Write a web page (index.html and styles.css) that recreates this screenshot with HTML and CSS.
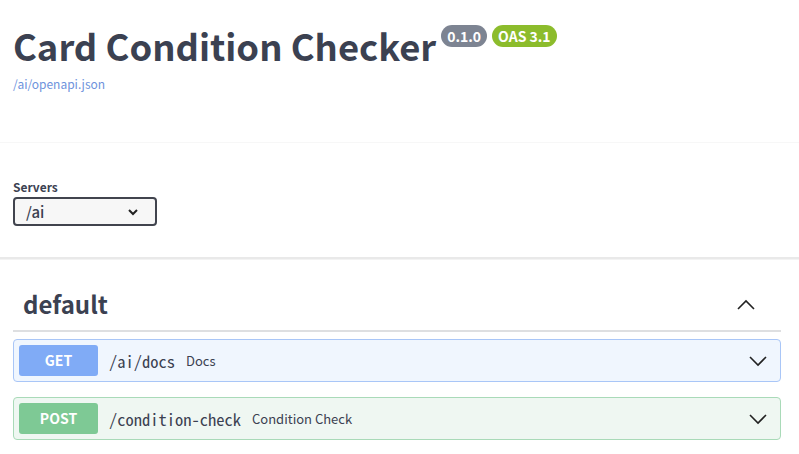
FILE: index.html
```html
<!DOCTYPE html>
<html>
<head>
<meta charset="utf-8">
<link rel="stylesheet" href="styles.css">
</head>
<body>
<div class="info">
  <div class="title-row">
    <h2 class="title">Card Condition Checker</h2>
    <span class="badge version">0.1.0</span>
    <span class="badge oas">OAS 3.1</span>
  </div>
  <a class="link" href="#">/ai/openapi.json</a>
</div>
<div class="divider"></div>
<div class="scheme">
  <div class="servers-label">Servers</div>
  <div class="select"><span>/ai</span>
    <svg width="12" height="8" viewBox="0 0 12 8"><path d="M2 2 L6 6 L10 2" fill="none" stroke="#222" stroke-width="2"/></svg>
  </div>
</div>
<div class="ops">
  <div class="tag">
    <h3 class="tag-name">default</h3>
    <svg class="chev" width="20" height="12" viewBox="0 0 20 12"><path d="M2 11 L10 3 L18 11" fill="none" stroke="#222" stroke-width="1.6"/></svg>
  </div>
  <div class="op get">
    <span class="method">GET</span>
    <span class="path">/ai/docs</span>
    <span class="summary">Docs</span>
    <svg class="chev-down" width="20" height="12" viewBox="0 0 20 12"><path d="M2 2 L10 10 L18 2" fill="none" stroke="#222" stroke-width="1.6"/></svg>
  </div>
  <div class="op post">
    <span class="method">POST</span>
    <span class="path">/condition-check</span>
    <span class="summary">Condition Check</span>
    <svg class="chev-down" width="20" height="12" viewBox="0 0 20 12"><path d="M2 2 L10 10 L18 2" fill="none" stroke="#222" stroke-width="1.6"/></svg>
  </div>
</div>
</body>
</html>
```
FILE: styles.css
```css
html, body {
  margin: 0;
  padding: 0;
  background: #fff;
  font-family: "Noto Sans CJK JP", "Noto Sans", sans-serif;
  color: #3b4151;
}
.info {
  padding: 20px 18px 0 13px;
  height: 120px;
  box-sizing: border-box;
}
.title-row {
  display: flex;
  align-items: flex-start;
}
.title {
  margin: 0;
  font-size: 36.4px;
  font-weight: 700;
  line-height: 50px;
  color: #3b4151;
}
.badge {
  margin-top: 5px;
  height: 22px;
  line-height: 22px;
  padding: 0 6px;
  border-radius: 11px;
  color: #fff;
  font-size: 14px;
  font-weight: 700;
}
.version { background: #7d8492; margin-left: 5px; }
.oas { background: #8cbc2c; margin-left: 5px; }
.link {
  display: block;
  margin-top: 5px;
  font-size: 12px;
  color: #6e93dc;
  text-decoration: none;
}
.divider {
  height: 1px;
  background: #f7f7f7;
  margin-top: 22px;
}
.scheme {
  padding: 36px 0 31px 13px;
  border-bottom: 2px solid #e9e9e9;
  box-shadow: 0 1px 0 #f3f3f3;
}
.servers-label {
  font-size: 12px;
  font-weight: 700;
  line-height: 16px;
  margin-bottom: 2px;
}
.select {
  width: 144px;
  height: 29px;
  box-sizing: border-box;
  border: 2px solid #41444e;
  border-radius: 4px;
  background: #f7f7f7;
  display: flex;
  align-items: center;
  justify-content: space-between;
  padding: 0 16px 0 11px;
  font-size: 15px;
  font-weight: 500;
  color: #3b4151;
}
.ops {
  padding: 0 18px 0 13px;
}
.tag {
  display: flex;
  align-items: center;
  justify-content: space-between;
  height: 73px;
  padding: 0 25px 0 10px;
  border-bottom: 2px solid #dedfe1;
  box-sizing: border-box;
}
.tag-name {
  margin: 18px 0 0 0;
  font-size: 24px;
  font-weight: 700;
}
.chev { margin-top: 18px; }
.op {
  display: flex;
  align-items: center;
  height: 43px;
  box-sizing: border-box;
  border-radius: 4px;
  padding: 0 12px 0 5px;
  margin-top: 7px;
  margin-bottom: 15px;
}
.op.get {
  background: #f0f6fe;
  border: 1px solid #a9c6f7;
}
.op.post {
  background: #eff7f2;
  border: 1px solid #a9dab8;
  margin-top: 0;
}
.method {
  width: 79px;
  height: 31px;
  line-height: 31px;
  border-radius: 3px;
  text-align: center;
  color: #fff;
  font-size: 14px;
  font-weight: 700;
}
.get .method { background: #80abf6; }
.post .method { background: #7ec995; }
.path {
  margin-left: 11px;
  font-family: "Noto Sans Mono CJK JP", "DejaVu Sans Mono", monospace;
  font-size: 16.5px;
  color: #3b4151;
}
.summary {
  margin-left: 11px;
  font-size: 13px;
  color: #3b4151;
  flex: 1;
}
```
